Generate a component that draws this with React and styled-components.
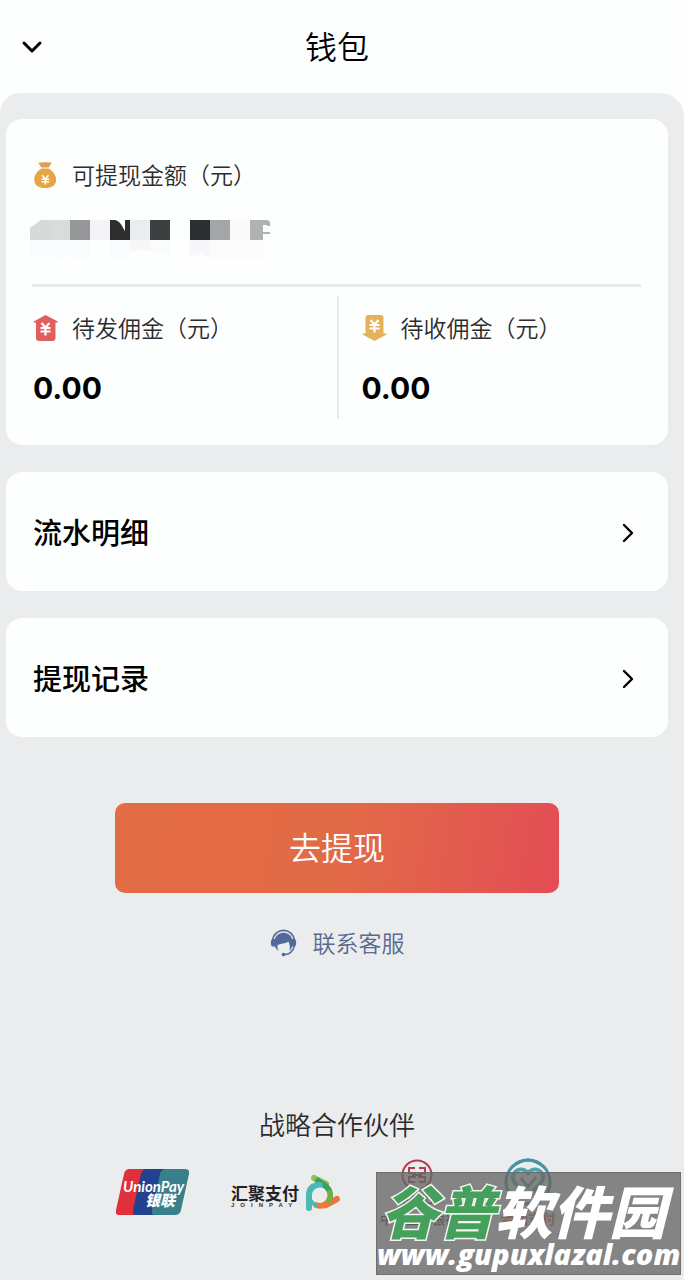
import React from "react";
import styled, { createGlobalStyle, css } from "styled-components";

const sans = `"Noto Sans", "Noto Sans CJK SC", sans-serif`;

const GlobalStyle = createGlobalStyle`
  * {
    box-sizing: border-box;
  }

  body {
    margin: 0;
    background: #fdfefe;
    color: #000;
    font-family: ${sans};
  }
`;

const Page = styled.div`
  position: relative;
  display: flex;
  flex-direction: column;
  min-height: 100vh;
  overflow: hidden;
`;

const Header = styled.header`
  display: grid;
  grid-template-columns: 64px 1fr 64px;
  align-items: center;
  height: 93px;
  padding-right: 10px;
`;

const IconButton = styled.button`
  display: flex;
  justify-content: center;
  padding: 8px 0;
  border: 0;
  background: none;
  color: #000;
  cursor: pointer;
`;

const Title = styled.h1`
  margin: 0;
  font-size: 32px;
  font-weight: 350;
  line-height: 48px;
  text-align: center;
`;

const Panel = styled.main`
  display: flex;
  flex: 1;
  flex-direction: column;
  gap: 27px;
  padding: 26px 16px 50px 6px;
  border-radius: 20px 24px 0 0;
  background: #ebeced;
`;

const cardStyle = css`
  border-radius: 16px;
  background: #fdfefe;
`;

const Balance = styled.section`
  ${cardStyle}
  padding: 38px 27px 26px 26px;
`;

const Label = styled.div`
  display: flex;
  align-items: center;
  gap: 13px;
  color: #2b2c2e;
  font-size: 23px;
  font-weight: 350;
  line-height: 36px;
`;

const Mosaic = styled.svg`
  display: block;
  margin: 27px 0 24px -2px;
`;

const Columns = styled.div`
  display: grid;
  grid-template-columns: 1fr 1fr;
  padding-top: 9px;
  border-top: 3px solid #e8eaeb;
`;

const Column = styled.div`
  height: 123px;
  padding: 14px 0 0 ${props => (props.$divided ? "22px" : "0")};
  border-left: ${props => (props.$divided ? "2px solid #e8eaeb" : "0")};
`;

const Amount = styled.div`
  margin-top: 22px;
  padding-left: 1px;
  font-family: Inter, sans-serif;
  font-size: 30px;
  font-weight: 700;
  line-height: 40px;
`;

const MenuRow = styled.button`
  ${cardStyle}
  display: flex;
  align-items: center;
  justify-content: space-between;
  width: 100%;
  height: 119px;
  padding: 2px 33px 0 27px;
  border: 0;
  color: #000;
  font-family: ${sans};
  font-size: 29px;
  font-weight: 500;
  line-height: 44px;
  text-align: left;
  cursor: pointer;
`;

const Actions = styled.div`
  display: flex;
  flex-direction: column;
  align-items: center;
  gap: 32px;
  margin-top: 39px;
`;

const Submit = styled.button`
  width: 67%;
  height: 90px;
  border: 0;
  border-radius: 10px;
  background: linear-gradient(100deg, #e26c46 0%, #e26b47 50%, #e34e54 98%);
  color: #fff;
  font-family: ${sans};
  font-size: 32px;
  font-weight: 350;
  line-height: 48px;
  cursor: pointer;
`;

const Service = styled.a`
  display: flex;
  align-items: center;
  gap: 16px;
  color: #59698f;
  font-size: 23px;
  font-weight: 350;
  line-height: 36px;
  text-decoration: none;
`;

const Partners = styled.section`
  display: flex;
  flex-direction: column;
  align-items: center;
  gap: 11px;
  margin-top: 118px;
`;

const PartnersTitle = styled.h2`
  margin: 0;
  color: #2b2c2e;
  font-size: 26px;
  font-weight: 350;
  line-height: 38px;
`;

const Logos = styled.div`
  display: flex;
  align-items: center;
  justify-content: space-between;
  width: 67%;
`;

const Watermark = styled.div`
  position: absolute;
  right: 3px;
  bottom: 5px;
  width: 305px;
  height: 103px;
  border: 1px solid #6d6e6e;
  background: rgba(103, 103, 103, 0.78);
  color: #fff;
  font-style: italic;
  white-space: nowrap;
`;

const SiteName = styled.div`
  padding: 8px 0 0 4px;
  font-size: 57px;
  font-weight: 900;
  line-height: 62px;

  span {
    color: #45a05c;
    -webkit-text-stroke: 3px #f2f5f2;
    paint-order: stroke fill;
  }
`;

const SiteUrl = styled.div`
  font-family: "Open Sans", sans-serif;
  font-size: 29px;
  font-weight: 800;
  line-height: 22px;
`;

const ChevronDown = () => (
  <svg width="22" height="14" viewBox="0 0 22 14" fill="none">
    <path
      d="M3 3l8 8 8-8"
      stroke="currentColor"
      strokeWidth="3"
      strokeLinecap="round"
      strokeLinejoin="round"
    />
  </svg>
);

const ChevronRight = () => (
  <svg width="13" height="20" viewBox="0 0 13 20" fill="none">
    <path
      d="M2 2l8 8-8 8"
      stroke="currentColor"
      strokeWidth="2.4"
      strokeLinecap="round"
      strokeLinejoin="round"
    />
  </svg>
);

const MoneyBag = () => (
  <svg width="27" height="28" viewBox="0 0 27 28">
    <path
      d="M6 1.5c2 .8 4-.8 5.500 0 1-.8 2.500-.8 3.500 0 1.500-.8 3.500.6 5 0l-3.500 5h-7z"
      fill="#dfa04a"
    />
    <path
      d="M9.500 7.500h7c4 2.200 7.700 6.500 7.700 11.200 0 5.500-4.200 8.300-11 8.300s-11-2.800-11-8.300c0-4.700 3.300-9 7.300-11.200z"
      fill="#e8a548"
    />
    <path
      d="M10.200 14.300l3.200 3.700 3.200-3.700M9.700 18.200h7.400M9.700 20.700h7.400M13.400 18v5.500"
      fill="none"
      stroke="#fff"
      strokeWidth="1.6"
    />
  </svg>
);

const Yen = ({ y }) => (
  <path
    d={`M9.500 ${y}l4 4.500 4-4.500M8.500 ${y + 5}h10M8.500 ${y +
      8.5}h10M13.500 ${y + 4}v8.500`}
    fill="none"
    stroke="#fff"
    strokeWidth="2.2"
  />
);

const ArrowUp = () => (
  <svg width="27" height="28" viewBox="0 0 27 28">
    <path
      d="M13.500 1l12.300 6.500v1h-2.300v15.500a3 3 0 0 1-3 3h-13.500a3 3 0 0 1-3-3v-15.500h-2.300v-1z"
      fill="#e35f5e"
    />
    <Yen y={9} />
  </svg>
);

const ArrowDown = () => (
  <svg width="27" height="28" viewBox="0 0 27 28">
    <path
      d="M7.500 1h12a3 3 0 0 1 3 3v15.500h3v1l-12 6.500-12-6.500v-1h3v-15.500a3 3 0 0 1 3-3z"
      fill="#e5b159"
    />
    <Yen y={6} />
  </svg>
);

const Headset = () => (
  <svg width="27" height="28" viewBox="0 0 27 28">
    <path
      d="M2.500 11.500c2-13.500 20-13.500 22 0"
      fill="none"
      stroke="#53699a"
      strokeWidth="1.6"
    />
    <path
      d="M4.800 10c2.700-8.500 14.700-8.500 17.400 0h2.800c1.600 2 1.600 5 .2 7.500h-3.200c-.5 2-1.300 3.300-2.500 4.500.7-2.800.5-6.200-1-9.300-3 2-7.500 1.300-10.800 3.300-.8 2 0 4.300 1.300 6-2-1.200-3.400-2.700-4-4.500h-3.200c-1.400-2.500-1.400-5.500.2-7.500z"
      fill="#53699a"
    />
    <path
      d="M24.300 17c-1 4.800-4.800 8.300-10.300 8.700"
      fill="none"
      stroke="#53699a"
      strokeWidth="1.4"
    />
    <circle cx="13.5" cy="25.6" r="1.8" fill="#53699a" />
  </svg>
);

const HiddenBalance = () => (
  <Mosaic width="241" height="40" viewBox="0 0 241 40" aria-hidden="true">
    <path d="M0 8l11-8h9v20h-20z" fill="#d8d9db" />
    <path d="M20 0h20v20h-20z" fill="#dadbdb" />
    <path d="M40 0h20v20h-20z" fill="#969799" />
    <path d="M60 0h20v20h-20z" fill="#f4f4f6" />
    <path d="M80 0h5c5 1 7 6 10 11v-11h5v20h-20z" fill="#2d2e30" />
    <path d="M100 0h20v20h-20z" fill="#ebecee" />
    <path d="M120 0h20v20h-20z" fill="#3e3f41" />
    <path d="M160 0h20v20h-20z" fill="#2d2e30" />
    <path d="M180 0h20v20h-20z" fill="#a4a5a7" />
    <path d="M200 0h20v20h-20z" fill="#fafafa" />
    <path d="M220 0h18l2 2v4h-3v-1h-4v7h7v2h-7v6h-13z" fill="#b0b1b3" />
    <path
      d="M0 20h60v19h-12l-8-3-12 2-10-3-9 3-9-4zM80 20h20v18h-20zM120 20h20v16l-20-5z"
      fill="#fafbfc"
    />
    <path d="M100 20h20v11l-8-2-12 3zM160 20h20v19l-9-5-11 3z" fill="#f7f7f9" />
    <path d="M180 20h53v19h-53z" fill="#fcfcfd" />
  </Mosaic>
);

const UnionPay = () => (
  <svg width="74" height="48" viewBox="0 0 74 48" role="img">
    <path d="M15 1h22l-10 46h-23q-4 0-3-5l8-36q1-5 6-5z" fill="#e1303a" />
    <path d="M31 1h24l-10 46h-24q-4 0-3-5l8-36q1-5 5-5z" fill="#22418f" />
    <path
      d="M52 1h18q5 0 4 5l-8 36q-1 5-6 5h-20q-4 0-3-5l8-36q1-5 7-5z"
      fill="#39808c"
    />
    <text
      x="8"
      y="24"
      fill="#fff"
      fontFamily="Lato, sans-serif"
      fontSize="15"
      fontWeight="700"
      fontStyle="italic"
    >
      UnionPay
    </text>
    <text
      x="30"
      y="38"
      fill="#fff"
      fontFamily="Noto Sans CJK SC, sans-serif"
      fontSize="15"
      fontWeight="900"
      fontStyle="italic"
    >
      银联
    </text>
  </svg>
);

const JoinPay = () => (
  <svg width="117" height="46" viewBox="0 0 117 46" fill="none" role="img">
    <text
      x="6"
      y="31"
      fill="#222"
      fontFamily="Noto Sans CJK SC, sans-serif"
      fontSize="17"
      fontWeight="700"
    >
      汇聚支付
    </text>
    <text
      x="6"
      y="38"
      fill="#333"
      fontFamily="Liberation Sans, sans-serif"
      fontSize="6"
      fontWeight="700"
      letterSpacing="6"
    >
      JOINPAY
    </text>
    <g strokeLinecap="round">
      <path d="M112 30l-11 6" stroke="#ed7441" strokeWidth="6" />
      <path d="M89 9l12 6" stroke="#8bc34c" strokeWidth="6" />
      <path d="M93 12l6 4q6 4 6 10" stroke="#3f9f5e" strokeWidth="6" />
      <path d="M105 24q1 7-4 11" stroke="#72b043" strokeWidth="6" />
      <path d="M101 35q-4 3-10 1" stroke="#ef7a36" strokeWidth="6" />
      <path d="M84 39v-12q0-11 11-11" stroke="#4ab9b4" strokeWidth="6" />
      <path d="M86 32q2 3 5 4" stroke="#4ab9b4" strokeWidth="4" />
    </g>
    <circle cx="95" cy="26" r="7.5" fill="#ebeced" />
  </svg>
);

const Icbc = () => (
  <svg width="84" height="74" viewBox="0 -3 84 74" fill="none" role="img">
    <circle cx="38" cy="17" r="14.5" stroke="#b83a4b" strokeWidth="2" />
    <path
      d="M36 10h-6v5h6v4h-6v5h6M40 10h6v5h-6v4h6v5h-6M33 17h10"
      stroke="#b83a4b"
      strokeWidth="2"
    />
    <text
      x="39"
      y="46"
      fill="#222"
      fontFamily="Liberation Sans, sans-serif"
      fontSize="13"
      textAnchor="middle"
    >
      ICBC
    </text>
    <text
      x="40"
      y="66"
      fill="#222"
      fontFamily="Noto Sans CJK SC, sans-serif"
      fontSize="13"
      textAnchor="middle"
    >
      中国工商银行
    </text>
  </svg>
);

const HeartPay = () => (
  <svg width="60" height="74" viewBox="0 -3 60 74" fill="none" role="img">
    <circle cx="29" cy="24" r="22" stroke="#4794a2" strokeWidth="3" />
    <path d="M12 10q17-16 34 0" stroke="#4794a2" strokeWidth="3" />
    <path
      d="M29 38l-13-13c-7-9 5-19 13-10 8-9 20 1 13 10z"
      stroke="#4fa3ad"
      strokeWidth="4"
      strokeLinejoin="round"
    />
    <path d="M22 20l7 9 8-10" stroke="#4fa3ad" strokeWidth="3" />
    <text
      x="29"
      y="66"
      fill="#d9692f"
      fontFamily="Noto Sans CJK SC, sans-serif"
      fontSize="14"
      fontWeight="700"
      textAnchor="middle"
    >
      合利支付
    </text>
  </svg>
);

const columns = [
  { label: "待发佣金（元）", amount: "0.00", Icon: ArrowUp },
  { label: "待收佣金（元）", amount: "0.00", Icon: ArrowDown }
];

const menu = ["流水明细", "提现记录"];

const App = () => (
  <>
    <GlobalStyle />
    <Page lang="zh-CN">
      <Header>
        <IconButton type="button" aria-label="返回">
          <ChevronDown />
        </IconButton>
        <Title>钱包</Title>
      </Header>
      <Panel>
        <Balance>
          <Label>
            <MoneyBag />
            可提现金额（元）
          </Label>
          <HiddenBalance />
          <Columns>
            {columns.map(({ label, amount, Icon }, index) => (
              <Column key={label} $divided={index > 0}>
                <Label>
                  <Icon />
                  {label}
                </Label>
                <Amount>{amount}</Amount>
              </Column>
            ))}
          </Columns>
        </Balance>
        {menu.map(item => (
          <MenuRow key={item} type="button">
            {item}
            <ChevronRight />
          </MenuRow>
        ))}
        <Actions>
          <Submit type="button">去提现</Submit>
          <Service href="#service">
            <Headset />
            联系客服
          </Service>
        </Actions>
        <Partners>
          <PartnersTitle>战略合作伙伴</PartnersTitle>
          <Logos>
            <UnionPay />
            <JoinPay />
            <Icbc />
            <HeartPay />
          </Logos>
        </Partners>
      </Panel>
      <Watermark>
        <SiteName>
          <span>谷普</span>软件园
        </SiteName>
        <SiteUrl>www.gupuxlazal.com</SiteUrl>
      </Watermark>
    </Page>
  </>
);

export default App;
